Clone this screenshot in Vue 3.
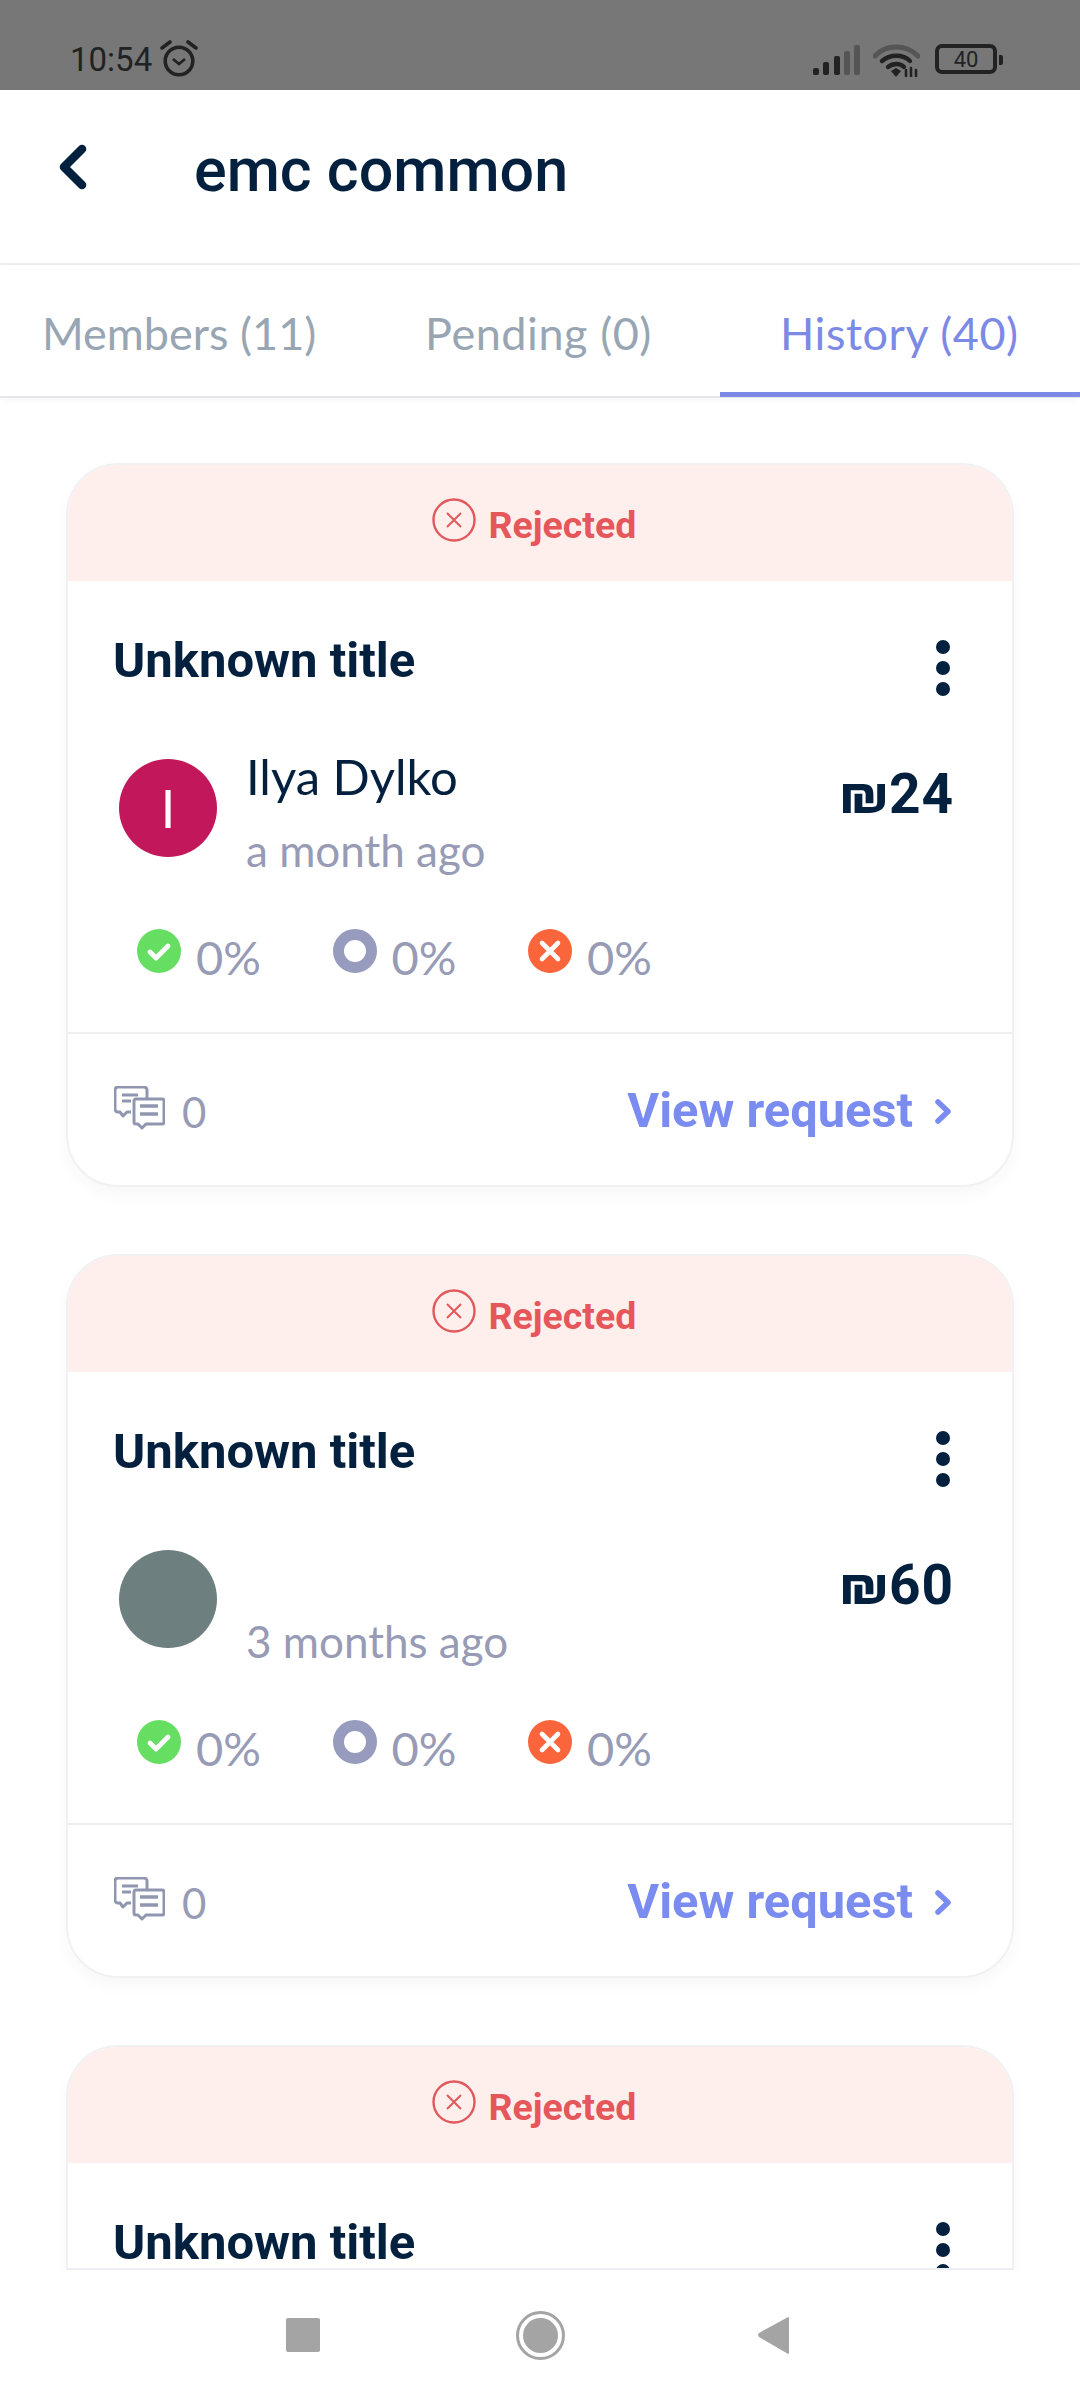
<script setup>
const requests = [
  { id: 1, name: 'Ilya Dylko', initial: 'I', color: '#c2185b', time: 'a month ago', amount: '24' },
  { id: 2, name: '', initial: '', color: '#6e7f80', time: '3 months ago', amount: '60' },
  { id: 3, titleOnly: true }
];
</script>

<template>
  <div class="screen">
    <div class="status-bar">
      <div class="status-left">
        <span class="clock">10:54</span>
        <svg class="alarm" viewBox="0 0 38 37" fill="none" stroke="#222" stroke-width="3.6">
          <circle cx="19" cy="21" r="13.8" />
          <path d="M13 19l6 5 6-5" stroke-width="2.8" />
          <path d="M2 8l8-6M36 8l-8-6" stroke-linecap="round" />
        </svg>
      </div>
      <div class="status-right">
        <svg class="signal" viewBox="0 0 47 30">
          <rect x="0" y="23" width="6" height="7" rx="2" fill="#222" />
          <rect x="10" y="17" width="6" height="13" rx="2" fill="#222" />
          <rect x="21" y="11" width="6" height="19" rx="2" fill="#222" />
          <rect x="31" y="6" width="6" height="24" rx="2" fill="#555" />
          <rect x="41" y="0" width="6" height="30" rx="2" fill="#555" />
        </svg>
        <svg class="wifi" viewBox="0 0 47 33" fill="none" stroke-linecap="round">
          <path d="M2 12C13 0 33 0 45 12" stroke="#555" stroke-width="5" />
          <path d="M9 17c8-7 21-7 28 0" stroke="#222" stroke-width="4.4" />
          <path d="M15 23c5-4 12-4 16 0" stroke="#222" stroke-width="4.4" />
          <path d="M18 27l5-3 5 3-5 6z" fill="#222" stroke="none" />
          <path d="M33 26v6M38 24v9M43 26v6" stroke="#222" stroke-width="2.6" />
        </svg>
        <div class="battery"><span>40</span></div>
        <div class="battery-nub"></div>
      </div>
    </div>

    <header class="top-bar">
      <svg class="back" viewBox="0 0 30 46" fill="none" stroke="#04203f" stroke-width="8.500" stroke-linecap="round" stroke-linejoin="round">
        <path d="M24 5L6 23l18 18" />
      </svg>
      <h1 class="page-title">emc common</h1>
    </header>

    <nav class="tabs">
      <div class="tab">Members (11)</div>
      <div class="tab tab-wide">Pending (0)</div>
      <div class="tab tab-wide tab-active">History (40)</div>
    </nav>

    <main class="list">
      <article v-for="item in requests" :key="item.id" class="card">
        <div class="banner">
          <svg class="rejected-icon" viewBox="0 0 44 44" fill="none" stroke="#e2585c">
            <circle cx="22" cy="22" r="20.5" stroke-width="2.4" />
            <path d="M15 15l14 14M29 15L15 29" stroke-width="2" />
          </svg>
          <span class="rejected-text">Rejected</span>
        </div>

        <div class="title-row">
          <h2 class="card-title">Unknown title</h2>
          <div class="menu-dots"><i></i><i></i><i></i></div>
        </div>

        <template v-if="!item.titleOnly">
          <div class="user-row">
            <div class="avatar" :style="{ background: item.color }">{{ item.initial }}</div>
            <div class="user-text">
              <div class="user-name">{{ item.name }}</div>
              <div class="user-time">{{ item.time }}</div>
            </div>
            <div class="amount">₪{{ item.amount }}</div>
          </div>

          <div class="stats">
            <div class="stat">
              <svg class="stat-icon" viewBox="0 0 44 44">
                <circle cx="22" cy="22" r="22" fill="#66de62" />
                <path d="M13 23l6 6 12-12" fill="none" stroke="#fff" stroke-width="4.800" stroke-linecap="round" stroke-linejoin="round" />
              </svg>
              <span>0%</span>
            </div>
            <div class="stat">
              <svg class="stat-icon" viewBox="0 0 44 44">
                <circle cx="22" cy="22" r="16.5" fill="#fff" stroke="#979bbd" stroke-width="11" />
              </svg>
              <span>0%</span>
            </div>
            <div class="stat">
              <svg class="stat-icon" viewBox="0 0 44 44">
                <circle cx="22" cy="22" r="22" fill="#fb653c" />
                <path d="M14 14l16 16M30 14L14 30" fill="none" stroke="#fff" stroke-width="4.600" stroke-linecap="round" />
              </svg>
              <span>0%</span>
            </div>
          </div>

          <div class="card-footer">
            <div class="comments">
              <svg class="comment-icon" viewBox="0 0 51 44" fill="none" stroke="#9096b0" stroke-width="3" stroke-linejoin="round">
                <path d="M17 26H13l-4 4-3-4H4a3 3 0 0 1-3-3V4a3 3 0 0 1 3-3h26a3 3 0 0 1 3 3v8" />
                <path d="M8 9h16M8 15h9" />
                <path d="M22 13h26a2 2 0 0 1 2 2v21a2 2 0 0 1-2 2H32l-4 4-4-4h-2a2 2 0 0 1-2-2V15a2 2 0 0 1 2-2z" fill="#fff" />
                <path d="M26 20h18M26 28h18" stroke-width="3.400" />
              </svg>
              <span>0</span>
            </div>
            <div class="view-link">
              <span>View request</span>
              <svg class="view-chevron" viewBox="0 0 18 27" fill="none" stroke="#7b8cf0" stroke-width="5.500" stroke-linecap="round" stroke-linejoin="round">
                <path d="M4 4l10 9.500L4 23" />
              </svg>
            </div>
          </div>
        </template>
      </article>
    </main>

    <footer class="nav-bar">
      <div class="nav-square"></div>
      <div class="nav-circle"><div></div></div>
      <svg class="nav-back" viewBox="0 0 31 37"><path d="M31 1v35a1 1 0 0 1-1.700.6L1 20a3 3 0 0 1 0-4L29.300.4A1 1 0 0 1 31 1z" fill="#a4a4a4" /></svg>
    </footer>
  </div>
</template>

<style scoped>
.screen {
  width: 1080px;
  height: 2400px;
  display: flex;
  flex-direction: column;
  overflow: hidden;
  background: #fff;
  font-family: Lato, "Open Sans", sans-serif;
}

.status-bar {
  height: 90px;
  flex: none;
  background: #777;
  display: flex;
  justify-content: space-between;
  padding: 40px 77px 0 70px;
  box-sizing: border-box;
}

.status-left {
  display: flex;
  align-items: flex-start;
  gap: 8px;
}

.clock {
  font-family: Roboto, sans-serif;
  font-size: 33px;
  line-height: 40px;
  color: #222;
}

.alarm {
  width: 38px;
  height: 37px;
}

.status-right {
  display: flex;
  align-items: flex-start;
  padding-top: 4px;
}

.signal {
  width: 47px;
  height: 30px;
  margin-top: 1px;
}

.wifi {
  width: 47px;
  height: 33px;
  margin-left: 13px;
}

.battery {
  width: 62px;
  height: 30px;
  margin-left: 15px;
  box-sizing: border-box;
  border: 4px solid #222;
  border-radius: 7px;
  display: flex;
  align-items: center;
  justify-content: center;
  font-family: Roboto, sans-serif;
  font-size: 22px;
  color: #222;
}

.battery-nub {
  width: 4px;
  height: 10px;
  margin: 11px 0 0 2px;
  background: #222;
  border-radius: 0 2px 2px 0;
}

.top-bar {
  height: 175px;
  flex: none;
  box-sizing: border-box;
  display: flex;
  align-items: flex-start;
  background: #fff;
  border-bottom: 2px solid #eceef0;
  padding: 54px 0 0 58px;
}

.back {
  width: 30px;
  height: 46px;
}

.page-title {
  margin: -9px 0 0 106px;
  font-family: Roboto, sans-serif;
  font-size: 61px;
  line-height: 70px;
  font-weight: 500;
  color: #04203f;
}

.tabs {
  height: 133px;
  flex: none;
  box-sizing: border-box;
  display: flex;
  border-bottom: 2px solid #e6e7ea;
  box-shadow: 0 2px 6px rgba(0, 0, 0, 0.04);
  font-size: 45px;
  color: #98a6b4;
}

.tab {
  padding: 41px 0 0 42px;
  line-height: 54px;
  width: 383px;
  box-sizing: border-box;
}

.tab-wide {
  width: 337px;
  letter-spacing: 0.55px;
}

.tab-active {
  flex: 1;
  color: #7c8ae6;
  border-bottom: 5px solid #7c8ae6;
  margin-bottom: -1px;
  padding-left: 60px;
}

.list {
  flex: 1;
  min-height: 0;
  overflow: hidden;
  position: relative;
  padding: 65px 66px 0;
}

.list::after {
  content: "";
  position: absolute;
  left: 66px;
  right: 66px;
  bottom: 0;
  height: 2px;
  background: #eceef4;
}

.card {
  height: 724px;
  box-sizing: border-box;
  margin-bottom: 67px;
  border: 2px solid #f1f1f3;
  border-radius: 52px;
  background: #fff;
  overflow: hidden;
  box-shadow: 0 8px 16px rgba(0, 0, 0, 0.03);
}

.banner {
  height: 116px;
  background: #feefec;
  display: flex;
  align-items: center;
  justify-content: center;
  gap: 13px;
  padding-right: 12px;
}

.rejected-icon {
  width: 44px;
  height: 44px;
  margin-top: -7px;
}

.rejected-text {
  font-family: Roboto, sans-serif;
  font-weight: 700;
  font-size: 37.5px;
  line-height: 44px;
  color: #e5575b;
  margin-top: 3px;
}

.title-row {
  display: flex;
  justify-content: space-between;
  padding: 50px 62px 0 45px;
}

.card-title {
  margin: 0;
  font-family: Roboto, sans-serif;
  font-size: 49px;
  line-height: 60px;
  font-weight: 700;
  color: #04203f;
}

.menu-dots {
  display: flex;
  flex-direction: column;
  gap: 7px;
  padding-top: 9px;
}

.menu-dots i {
  display: block;
  width: 14px;
  height: 14px;
  border-radius: 50%;
  background: #04203f;
}

.user-row {
  display: flex;
  align-items: flex-start;
  padding: 63px 58px 0 51px;
}

.avatar {
  width: 98px;
  height: 98px;
  flex: none;
  border-radius: 50%;
  display: flex;
  align-items: center;
  justify-content: center;
  font-size: 52px;
  color: #fff;
}

.user-text {
  flex: 1;
  margin-left: 29px;
  margin-top: -13px;
}

.user-name {
  height: 60px;
  font-size: 49px;
  line-height: 60px;
  color: #04203f;
}

.user-time {
  margin-top: 19px;
  font-size: 44px;
  line-height: 50px;
  color: #979bb5;
}

.amount {
  margin-top: 4px;
  font-family: Roboto, sans-serif;
  font-size: 55px;
  line-height: 62px;
  font-weight: 700;
  letter-spacing: 1px;
  color: #04203f;
}

.stats {
  display: flex;
  padding: 54px 0 0 69px;
}

.stat {
  display: flex;
  align-items: flex-start;
  width: 195.5px;
  font-size: 47px;
  line-height: 52px;
  color: #979bb5;
}

.stat span {
  margin: 2px 0 0 15px;
}

.stat-icon {
  width: 44px;
  height: 44px;
}

.card-footer {
  margin-top: 49px;
  border-top: 2px solid #eeeff1;
  display: flex;
  justify-content: space-between;
  padding: 52px 60px 0 46px;
}

.comments {
  display: flex;
  align-items: flex-start;
  gap: 17px;
  font-size: 42px;
  line-height: 52px;
  color: #979bb5;
}

.comment-icon {
  width: 51px;
  height: 44px;
}

.view-link {
  display: flex;
  align-items: center;
  gap: 21px;
  font-family: Roboto, sans-serif;
  font-size: 48.8px;
  line-height: 58px;
  font-weight: 700;
  color: #7b8cf0;
  margin-top: -4px;
}

.view-chevron {
  width: 18px;
  height: 27px;
}

.nav-bar {
  height: 130px;
  flex: none;
  background: #fff;
  display: flex;
  align-items: center;
  justify-content: center;
  padding-right: 6px;
}

.nav-square {
  width: 34px;
  height: 34px;
  background: #a4a4a4;
  border-radius: 2px;
}

.nav-circle {
  width: 49px;
  height: 49px;
  margin-left: 196px;
  box-sizing: border-box;
  border: 3px solid #a4a4a4;
  border-radius: 50%;
  padding: 4px;
}

.nav-circle div {
  width: 100%;
  height: 100%;
  border-radius: 50%;
  background: #a4a4a4;
}

.nav-back {
  width: 31px;
  height: 37px;
  margin-left: 193px;
}
</style>

<style>
body {
  margin: 0;
  background: #fff;
}
</style>
